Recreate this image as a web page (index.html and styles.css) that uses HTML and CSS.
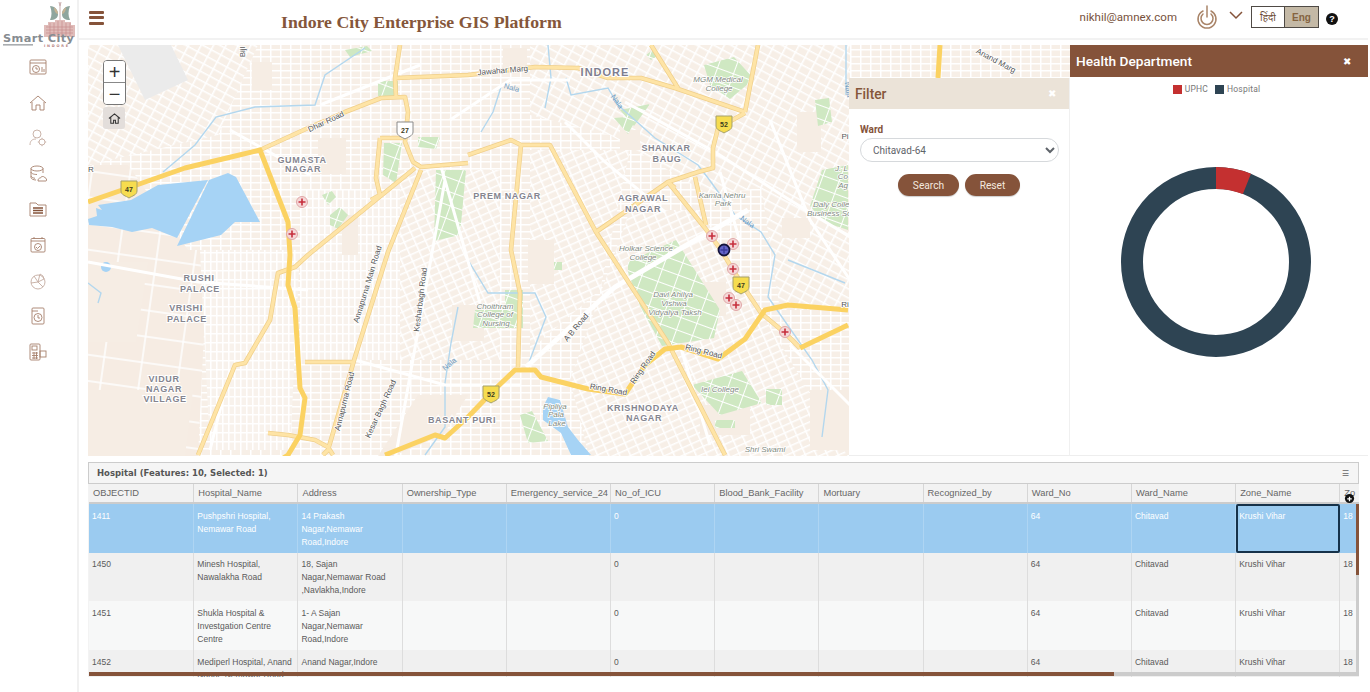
FILE: index.html
```html
<!DOCTYPE html>
<html lang="en">
<head>
<meta charset="utf-8">
<title>Indore City Enterprise GIS Platform</title>
<link rel="stylesheet" href="styles.css">
</head>
<body>
<aside class="sidebar">
  <svg class="logo" viewBox="0 0 79 47" width="79" height="47">
    <path d="M59 2l1 4 1-4M60 6v14" class="logo-stem"/>
    <path d="M50 6c5 0 8 4 8 8s-3 6-8 6c2-4 2-9 0-14z" class="logo-teal"/>
    <path d="M70 6c-5 0-8 4-8 8s3 6 8 6c-2-4-2-9 0-14z" class="logo-teal"/>
    <path d="M54 7c3 2 4 5 4 7-2 0-4-3-4-7zM66 7c-3 2-4 5-4 7 2 0 4-3 4-7z" class="logo-tan"/>
    <path d="M44 37V25h4v-3h7v-2h10v2h6v3h4v12z" class="logo-bld"/>
    <path d="M46 27h27M46 30h27M46 33h27M50 23v13M54 23v13M58 21v15M62 21v15M66 23v13M70 23v13" class="logo-win"/>
    <text x="3" y="42" class="logo-text">Smart City</text>
    <rect x="3" y="44" width="30" height="1.600" class="logo-bar"/>
    <text x="44" y="47" class="logo-sub">INDORE</text>
  </svg>
  <nav class="side-nav">
    <svg class="ico" viewBox="0 0 18 18"><rect x="1" y="2" width="16" height="14" rx="1"/><path d="M1 5h16"/><circle cx="7" cy="11" r="3.500"/><path d="M7 9v2h2M13 9v5M15 11v3"/></svg>
    <svg class="ico" viewBox="0 0 18 18"><path d="M1 9l8-7 8 7M3 8v8h4v-5h4v5h4V8"/></svg>
    <svg class="ico ico-l" viewBox="0 0 18 18"><circle cx="8" cy="5" r="4"/><path d="M1 16c0-4 2-6 6-6"/><circle cx="13" cy="13" r="3"/><path d="M13 8.800v1.200M13 16v1.200M8.800 13H10M16 13h1.200"/></svg>
    <svg class="ico" viewBox="0 0 18 18"><ellipse cx="8" cy="3.500" rx="6" ry="2.500"/><path d="M2 3.500v9c0 1.400 2.500 2.500 5 2.500M14 3.500V8M2 7c0 1.400 2.500 2.500 6 2.500M2 11c0 1 2 2 4 2.300"/><path d="M9 16c0-3 2-3 2.500-3 .5-2 4-2 4.500 0 2 0 2 3 1 3z"/></svg>
    <svg class="ico" viewBox="0 0 18 18"><path d="M1 3h6l2 2h8v11H1z"/><path class="ico-bar" d="M4 8h10M4 10.500h10M4 13h10"/></svg>
    <svg class="ico" viewBox="0 0 18 18"><rect x="2" y="2.500" width="14" height="13.500" rx="1"/><path d="M2 5h14M5 1v2M13 1v2M7 11l1.500 1.500L11 10"/><circle cx="9" cy="11" r="3.500"/></svg>
    <svg class="ico ico-l" viewBox="0 0 18 18"><circle cx="9" cy="10" r="7"/><path d="M5 4l4 6-7 1M9 10l5 5M9 10l2-8 3 2 1 3z"/></svg>
    <svg class="ico" viewBox="0 0 18 18"><rect x="3" y="1" width="12" height="16" rx="1"/><path d="M3 4h6"/><circle cx="9" cy="10.500" r="4"/><path d="M9 8v3h2"/></svg>
    <svg class="ico" viewBox="0 0 18 18"><rect x="1" y="1" width="10" height="16" rx="1"/><rect x="3" y="3" width="5" height="4"/><path d="M3 10h6M3 12.500h6M3 15h6M5 9v7M7.500 9v7"/><rect x="11" y="8" width="6" height="6"/></svg>
  </nav>
</aside>

<div class="main">
  <header class="topbar">
    <div class="menu-btn"><span></span><span></span><span></span></div>
    <h1 class="app-title">Indore City Enterprise GIS Platform</h1>
    <div class="user">
      <span class="email">nikhil@amnex.com</span>
      <svg class="power" viewBox="0 0 22 24" width="22" height="24"><path d="M7 6a9 9 0 1 0 8 0"/><path d="M7 9a6 6 0 1 0 8 0"/><path d="M11 1v11"/></svg>
      <svg class="chev" viewBox="0 0 14 9" width="14" height="9"><path d="M1 1l6 6 6-6"/></svg>
      <div class="lang"><span class="lang-hi">हिंदी</span><span class="lang-en">Eng</span></div>
      <span class="help">?</span>
    </div>
  </header>

  <section class="workspace">
    <div class="map">
      <svg class="map-svg" viewBox="88 45 982 411" width="982" height="411">
        <defs>
          <pattern id="g1" width="10" height="7" patternUnits="userSpaceOnUse"><rect width="10" height="7" fill="#f7efe7"/><path d="M0 .7h10M.7 0v7" stroke="#fff" stroke-width="1.700"/></pattern>
          <pattern id="g2" width="11" height="8" patternUnits="userSpaceOnUse" patternTransform="rotate(28)"><rect width="11" height="8" fill="#f7efe7"/><path d="M0 .7h11M.7 0v8" stroke="#fff" stroke-width="1.800"/></pattern>
          <pattern id="g3" width="10" height="7" patternUnits="userSpaceOnUse" patternTransform="rotate(-24)"><rect width="10" height="7" fill="#f7efe7"/><path d="M0 .7h10M.7 0v7" stroke="#fff" stroke-width="1.700"/></pattern>
          <pattern id="g4" width="38" height="26" patternUnits="userSpaceOnUse" patternTransform="rotate(8)"><rect width="38" height="26" fill="#f6ece3"/><path d="M0 1h38M1 0v26" stroke="#fff" stroke-width="1.500"/></pattern>
          <pattern id="g5" width="6" height="9" patternUnits="userSpaceOnUse"><rect width="6" height="9" fill="#f8f2ec"/><path d="M0 .7h6M.7 0v9" stroke="#fff" stroke-width="1.800"/></pattern>
          <pattern id="gp" width="17" height="13" patternUnits="userSpaceOnUse" patternTransform="rotate(20)"><rect width="17" height="13" fill="#cfe8c2"/><path d="M0 .5h17M.5 0v13" stroke="#fff" stroke-width="1"/></pattern>
          <g id="mk"><circle r="5.500" class="mk-o"/><path d="M-3.500 0h7M0-3.500v7" class="mk-p"/></g>
          <path id="sh" d="M-8-8h16v10c0 4-5 5-8 7-3-2-8-3-8-7z"/>
        </defs>
        <g class="base">
          <rect x="88" y="45" width="982" height="411" fill="url(#g1)"/>
          <path d="M88 45h170l-40 90-130 30z" fill="url(#g2)"/>
          <path d="M88 250h120l-10 206H88z" fill="url(#g4)"/>
          <path d="M88 165h40l60 85-30 40H88z" fill="url(#g4)"/>
          <path d="M200 250h100l-10 200h-80z" fill="url(#g5)"/>
          <path d="M300 190h110v170H300z" fill="url(#g5)"/>
          <path d="M400 170h100v190H400z" fill="url(#g3)"/>
          <path d="M530 45h320v130l-140 20-100-60-80-20z" fill="url(#g2)"/>
          <path d="M530 150h100l-30 140-70 60z" fill="url(#g3)"/>
          <path d="M630 210h70l90 150 60 100H590l-20-80z" fill="url(#g3)"/>
          <path d="M760 180h90v130h-70z" fill="url(#g2)"/>
          <g class="beige">
            <path d="M88 390h105l-8 66H88zM88 262h60l-12 80H88zM418 395h50l-25 40-50 21h-15zM528 240h26v44h-26zM810 390h40v60h-40zM702 282h24v34h-24zM342 215h16v40h-16zM452 305h32v36h-32zM797 112h24v40h-24zM700 405h50v30h-50zM620 130h20v20h-20zM503 48h24v24h-24zM782 218h28v20h-28zM252 62h20v28h-20zM318 138h28v36h-28z"/>
          </g>
          <g class="park">
            <path d="M378 81h20v16h-20zM345 50l22-4 5 5-22 6zM436 170h30l-6 65-26 6zM384 143h18l-6 40-13-8zM418 137h22l-4 12-18-2zM322 195l10-4 4 6-8 8zM330 215l10-8 8 8-10 14-8-4zM646 55l8-6 5 6-8 5zM704 65l30-8 20 22-24 20-20-14zM620 110l30-6-16 22zM614 118l24-2-10 18zM815 100l14-2 3 24-14 4zM822 170l26-5v65l-24-8-14-16z"/>
            <path d="M628 262l48-22 44 70-6 28-52 8-22-40-12-34zM475 310h30v-20h18v38h-50zM692 385l50-14 20 32-42 12zM766 389h16v16h-16zM520 415l12-4 16 30-20 2zM715 420h20v8h-20zM554 262h8v8h-8z"/>
          </g>
          <path d="M118 45h53l17 35-43 20z" class="grey-area"/>
          <g class="water">
            <path d="M98 205l33-5 27-15 50-5-31 58-25-10-20 4-20-5-23-2-1-6 9-3-1-8 6 2zM209 180l19-7 8 4 24 45h-25l-14 13-44 11z"/>
            <path d="M548 397l12 3 8 27 10 13 13 15h-20l-10-22-18-13v-13z"/>
            <circle cx="106" cy="267" r="5"/>
          </g>
          <g class="river">
            <path d="M163 172l32-27 21-28 39-10 60-2 10-30 40-27M548 45l3 33-6 30M501 87l-8 25-12 20M566 78l5 17 37-7 10 17 37 33 43 27 10 13 27 37 26 17 14 23 -7 42 44 63 16 30-6 47M788 260l25 10 32 13M468 260l20 33h47l11 24-18 48M458 307l-7 36-6 40v44l-20 28M88 283l13 10-3 10M846 45v50"/>
          </g>
          <g class="wroad">
            <path d="M355 360l90 25 75 0M88 262l110 20 110 8M625 102l90 50 70 45 65 40M440 163l40 140M720 172l20 70M680 345l30 100M770 120l40 100 40 60M320 105l100-40M230 130l80 45M790 345l60 60M445 180l-50 280M230 370l-20 80M565 122l40 40 60 50M450 120l60-40 60 0"/>
          </g>
          <path d="M526 367l89-80 63-37 70-40" class="wroad-b"/>
        </g>
        <g class="road-c">
          <path id="r-a" d="M260 150l48-22 37-16 36-14 24-1 3 15-3 30 8 20 8 5 47-4M400 45l-5 33 1 19M396 78l72-3 67-8 43 1 30 10h33l34 10 70 24M758 45l-13 67M651 45l27 43M745 113l-27 15-5 20v20l-15 4-30 10-72 50M668 182l37 46 16 22 20 33 20 30 24 20 15 15M695 177l11 48M675 188l-7-6M468 155l43-15 10 5h29l46 87 72 111 57 112M521 145l-10 105 9 43-2 74M415 168l-107 87-13 12-17 6-8 47-25 43-10 2-37 90M421 170l-33 82-33 105-27 93-5 5M305 362h50M268 433l20 2 27 5 13 7 5 8M380 138h23M380 138l-4 40 4 17-9 5"/>
        </g>
        <g class="road-f"><use href="#r-a"/></g>
        <g class="road-t">
          <path d="M88 202l40-14 57-20 46-11 29-7 28 72 2 33-2 30 7 23 5 80 5 10-5 37-12 20-20 13-8 22M385 455l50-20 10 3 23-21 23-24 24-23h20l6 7 47 12 37 5 20-29 20-16 16-2 37 12 27-20 20-29 23-5 60 5M800 348l48-23M940 45l-2 33"/>
        </g>
        <g class="lbl">
          <text x="605" y="76" class="lbl-big">INDORE</text>
          <text x="302" y="163">GUMASTA</text><text x="303" y="172">NAGAR</text>
          <text x="507" y="199">PREM NAGAR</text>
          <text x="666" y="151">SHANKAR</text><text x="667" y="162">BAUG</text>
          <text x="643" y="201">AGRAWAL</text><text x="643" y="212">NAGAR</text>
          <text x="199" y="281">RUSHI</text><text x="200" y="292">PALACE</text>
          <text x="186" y="311">VRISHI</text><text x="187" y="322">PALACE</text>
          <text x="164" y="382">VIDUR</text><text x="164" y="392">NAGAR</text><text x="165" y="402">VILLAGE</text>
          <text x="462" y="423">BASANT PURI</text>
          <text x="643" y="411">KRISHNODAYA</text><text x="644" y="421">NAGAR</text>
        </g>
        <g class="lbl-i">
          <text x="718" y="82">MGM Medical</text><text x="719" y="91">College</text>
          <text x="722" y="198">Kamla Nehru</text><text x="723" y="206">Park</text>
          <text x="646" y="251">Holkar Science</text><text x="643" y="260">College</text>
          <text x="673" y="297">Davi Ahilya</text><text x="674" y="306">Vishwa</text><text x="675" y="315">Vidyalya Taksh</text>
          <text x="495" y="309">Choithram</text><text x="495" y="317">College of</text><text x="496" y="326">Nursing</text>
          <text x="720" y="392">Iel College</text>
          <text x="555" y="409">Pipliya</text><text x="556" y="417">Pala</text><text x="557" y="426">Lake</text>
          <text x="813" y="207" class="lbl-st">Daly College</text><text x="807" y="216" class="lbl-st">Business School</text>
          <text x="848" y="171" class="lbl-end">J. L</text><text x="848" y="179" class="lbl-end">Co</text><text x="848" y="188" class="lbl-end">Ag</text>
          <text x="765" y="452">Shri Swami</text>
        </g>
        <g class="lbl-r">
          <text transform="translate(503 73) rotate(-5)">Jawahar Marg</text>
          <text transform="translate(327 124) rotate(-25)">Dhar Road</text>
          <text transform="translate(370 285) rotate(-73)">Annapurna Main Road</text>
          <text transform="translate(423 300) rotate(-83)">Kesharbagh Road</text>
          <text transform="translate(347 402) rotate(-76)">Annapurna Road</text>
          <text transform="translate(383 410) rotate(-65)">Kesar Bagh Road</text>
          <text transform="translate(578 329) rotate(-50)">A B Road</text>
          <text transform="translate(608 392) rotate(10)">Ring Road</text>
          <text transform="translate(645 369) rotate(-55)">Ring Road</text>
          <text transform="translate(703 354) rotate(14)">Ring Road</text>
          <text transform="translate(245 52) rotate(-90)">Bijl</text>
          <text x="845" y="139">Pi</text><text x="845" y="307">Ri</text>
          <text x="88" y="172" class="lbl-start">R</text>
          <text transform="translate(760 57) rotate(28)" x="210" y="-105">Anand Marg</text>
        </g>
        <g class="lbl-n">
          <text transform="translate(511 90) rotate(15)">Nala</text>
          <text transform="translate(615 103) rotate(55)">Nala</text>
          <text transform="translate(746 224) rotate(35)">Nala</text>
          <text transform="translate(451 366) rotate(-40)">Nala</text>
          <text transform="translate(846 90) rotate(80)">Nala</text>
        </g>
        <g class="shield">
          <g transform="translate(129 189)"><use href="#sh" class="sh-y"/><text y="3">47</text></g>
          <g transform="translate(405 130)"><use href="#sh" class="sh-w"/><text y="3">27</text></g>
          <g transform="translate(724 124)"><use href="#sh" class="sh-y"/><text y="3">52</text></g>
          <g transform="translate(741 285)"><use href="#sh" class="sh-y"/><text y="3">47</text></g>
          <g transform="translate(491 394)"><use href="#sh" class="sh-y"/><text y="3">52</text></g>
        </g>
        <use href="#mk" x="302" y="202"/><use href="#mk" x="292" y="234"/><use href="#mk" x="712" y="236"/>
        <use href="#mk" x="733" y="244"/><use href="#mk" x="733" y="269"/><use href="#mk" x="729" y="298"/>
        <use href="#mk" x="736" y="305"/><use href="#mk" x="785" y="332"/>
        <circle cx="724" cy="250" r="5.500" class="mk-sel"/><path d="M720.500 250h7M724 246.500v7" class="mk-selp"/>
      </svg>
      <div class="zoom">
        <button class="zoom-b" type="button">+</button>
        <button class="zoom-b" type="button">−</button>
      </div>
      <div class="home-b"><svg viewBox="0 0 14 14" width="13" height="13"><path d="M1 7l6-5 6 5M3 6v6h3V9h2v3h3V6"/></svg></div>
      <div class="filter">
        <div class="filter-h"><span>Filter</span><span class="filter-x">✖</span></div>
        <div class="filter-b">
          <label class="ward">Ward</label>
          <select class="ward-sel"><option>Chitavad-64</option></select>
          <div class="btns"><button class="pill pill-s" type="button">Search</button><button class="pill pill-r" type="button">Reset</button></div>
        </div>
      </div>
    </div>
    <div class="panel">
      <div class="panel-h"><span>Health Department</span><span class="panel-x">✖</span></div>
      <div class="legend"><i class="sw sw-r"></i><span>UPHC</span><i class="sw sw-b"></i><span>Hospital</span></div>
      <svg class="donut" viewBox="0 0 200 200" width="200" height="200">
        <circle cx="100" cy="100" r="84" class="d-b"/>
        <circle cx="100" cy="100" r="84" class="d-r" pathLength="100" stroke-dasharray="6 94" transform="rotate(-90 100 100)"/>
      </svg>
    </div>
  </section>

  <section class="grid">
    <div class="grid-title"><span>Hospital (Features: 10, Selected: 1)</span><span class="grid-menu">☰</span></div>
    <div class="grid-body">
      <div class="row head"><div>OBJECTID</div><div>Hospital_Name</div><div>Address</div><div>Ownership_Type</div><div>Emergency_service_24</div><div>No_of_ICU</div><div>Blood_Bank_Facility</div><div>Mortuary</div><div>Recognized_by</div><div>Ward_No</div><div>Ward_Name</div><div>Zone_Name</div><div>Zo</div></div>
      <div class="row sel"><div>1411</div><div>Pushpshri Hospital, Nemawar Road</div><div>14 Prakash Nagar,Nemawar Road,Indore</div><div></div><div></div><div>0</div><div></div><div></div><div></div><div>64</div><div>Chitavad</div><div class="active">Krushi Vihar</div><div>18</div></div>
      <div class="row alt"><div>1450</div><div>Minesh Hospital, Nawalakha Road</div><div>18, Sajan Nagar,Nemawar Road ,Navlakha,Indore</div><div></div><div></div><div>0</div><div></div><div></div><div></div><div>64</div><div>Chitavad</div><div>Krushi Vihar</div><div>18</div></div>
      <div class="row"><div>1451</div><div>Shukla Hospital &amp; Investgation Centre Centre</div><div>1- A Sajan Nagar,Nemawar Road,Indore</div><div></div><div></div><div>0</div><div></div><div></div><div></div><div>64</div><div>Chitavad</div><div>Krushi Vihar</div><div>18</div></div>
      <div class="row alt"><div>1452</div><div>Mediperl Hospital, Anand Nagar, Nemawar Road</div><div>Anand Nagar,Indore</div><div></div><div></div><div>0</div><div></div><div></div><div></div><div>64</div><div>Chitavad</div><div>Krushi Vihar</div><div>18</div></div>
      <div class="hbar"><div class="hbar-t"></div></div>
      <div class="vbar"><div class="vbar-t"></div></div>
      <svg class="col-add" viewBox="0 0 12 12" width="11" height="11"><circle cx="6" cy="6" r="5"/><path d="M3.500 6.500h5M6 4v5"/></svg>
    </div>
  </section>
</div>
</body>
</html>
```

FILE: styles.css
```css
* { box-sizing: border-box; }
html, body { margin: 0; height: 100%; overflow: hidden; background: #fff; }
body { display: flex; width: 1370px; height: 692px; font-family: "Liberation Sans", Arial, sans-serif; }

.sidebar { width: 79px; flex: none; border-right: 2px solid #f1f1f1; display: flex; flex-direction: column; }
.logo { display: block; flex: none; }
.logo-stem { fill: none; stroke: #b99; stroke-width: .8; }
.logo-teal { fill: #8fa69e; }
.logo-tan { fill: #c6b394; }
.logo-bld { fill: #e0bcb9; }
.logo-win { fill: none; stroke: #c68e8d; stroke-width: .7; }
.logo-text { font: bold 11.300px "DejaVu Sans", sans-serif; letter-spacing: .4px; fill: #868c91; }
.logo-bar { fill: #a9adb0; }
.logo-sub { font: bold 3.500px "DejaVu Sans", sans-serif; letter-spacing: 1.800px; fill: #b58080; }
.side-nav { display: flex; flex-direction: column; align-items: center; gap: 17.600px; padding-top: 11px; padding-right: 1px; }
.ico { width: 18px; height: 18px; fill: none; stroke: #a6806c; stroke-width: .9; flex: none; }
.ico-l { stroke: #c4aca0; }
.ico-bar { stroke: #85533a; stroke-width: 1.300; }

.main { flex: 1; min-width: 0; display: flex; flex-direction: column; }
.topbar { height: 40px; margin-right: 2px; padding: 0 0 0 10px; display: flex; align-items: center; border-bottom: 2px solid #f2f2f2; position: relative; flex: none; }
.menu-btn { width: 15px; display: flex; flex-direction: column; gap: 2.500px; margin-top: -3px; }
.menu-btn span { display: block; height: 3px; background: #85533a; border-radius: 1px; }
.app-title { margin: 6px 0 0 177px; font: bold 17.750px "Liberation Serif", "Times New Roman", serif; color: #85563a; white-space: nowrap; }
.user { margin-left: auto; display: flex; align-items: center; padding-right: 30px; margin-top: -4px; }
.email { font: 11.500px Roboto, sans-serif; color: #77513c; }
.power { margin-left: 19px; fill: none; stroke: #a98468; stroke-width: 1.500; stroke-linecap: round; }
.chev { margin-left: 11px; margin-top: -3px; fill: none; stroke: #85533a; stroke-width: 1.500; }
.lang { margin-left: 8px; width: 68px; height: 22px; display: flex; border: 1px solid #4f4a45; font-size: 10px; }
.lang-hi { flex: 1; display: flex; align-items: center; justify-content: center; font-family: "Noto Sans", "DejaVu Sans", sans-serif; color: #6b4a36; background: #fff; border-right: 1px solid #4f4a45; }
.lang-en { width: 33px; display: flex; align-items: center; justify-content: center; font-weight: bold; color: #85633f; background: #c4b9a6; }
.help { margin-left: 7px; width: 12px; height: 12px; border-radius: 50%; background: #111; color: #fff; font: bold 9px/12px "Liberation Sans", sans-serif; text-align: center; margin-top: 3px; }

.workspace { display: flex; height: 411px; margin: 5px 0 0 9px; flex: none; }
.map { width: 982px; flex: none; position: relative; overflow: hidden; }
.map-svg { display: block; }
.base { filter: blur(.4px); }
.grey-area { fill: #ebebeb; }
.beige { fill: #f6ede4; }
.park { fill: url(#gp); }
.water { fill: #a6d3f5; }
.river { fill: none; stroke: #b3d7ee; stroke-width: 1.400; }
.wroad { fill: none; stroke: #fff; stroke-width: 3; }
.wroad-b { fill: none; stroke: #fff; stroke-width: 5; }
.road-c { fill: none; stroke: #f0cf8a; stroke-width: 4.600; stroke-linejoin: round; }
.road-f { fill: none; stroke: #fee4a6; stroke-width: 3.200; stroke-linejoin: round; }
.road-t { fill: none; stroke: #fbd262; stroke-width: 5; stroke-linejoin: round; }
.lbl text { font: bold 9px "Liberation Sans", sans-serif; letter-spacing: .6px; fill: #85858f; text-anchor: middle; stroke: #fff; stroke-width: 2px; paint-order: stroke; }
.lbl .lbl-big { font-size: 11px; letter-spacing: 1px; fill: #7e7e90; }
.lbl-i text { font: italic 8px "Liberation Sans", sans-serif; fill: #7f8a80; text-anchor: middle; stroke: #fff; stroke-width: 1.500px; paint-order: stroke; }
.lbl-i .lbl-end { text-anchor: end; }
.lbl-i .lbl-st { text-anchor: start; }
.lbl-r text { font: 8px "Liberation Sans", sans-serif; fill: #555; text-anchor: middle; stroke: #fff; stroke-width: 1.500px; paint-order: stroke; }
.lbl-r .lbl-start { text-anchor: start; }
.lbl-n text { font: 7.500px "Liberation Sans", sans-serif; fill: #6a98bf; text-anchor: middle; }
.shield text { font: bold 7px "Liberation Sans", sans-serif; fill: #3c3c20; text-anchor: middle; }
.sh-y { fill: #f6dc4f; stroke: #a5a06a; stroke-width: 1; }
.sh-w { fill: #fff; stroke: #8a8a8a; stroke-width: 1; }
.mk-o { fill: #f5d8d8; stroke: #e0a7a7; stroke-width: 1; }
.mk-p { stroke: #c62f3d; stroke-width: 1.600; fill: none; }
.mk-sel { fill: #6464c8; stroke: #14143c; stroke-width: 1.800; }
.mk-selp { stroke: #3a3a9a; stroke-width: 1.400; fill: none; }

.zoom { position: absolute; left: 15px; top: 15px; width: 23px; height: 45px; display: flex; flex-direction: column; background: #fff; border: 1px solid #777; border-radius: 4px; overflow: hidden; }
.zoom-b { flex: 1; padding: 0; border: 0; background: #fff; font: 20px/20px "Liberation Sans", sans-serif; color: #333; }
.zoom-b + .zoom-b { border-top: 1px solid #888; }
.home-b { position: absolute; left: 15px; top: 62px; width: 22px; height: 22px; display: flex; align-items: center; justify-content: center; background: #e3dedb; border-radius: 3px; }
.home-b svg { fill: none; stroke: #333; stroke-width: 1.100; }

.filter { position: absolute; left: 761px; top: 33px; width: 221px; height: 378px; background: #fff; border-right: 1px solid #f0f0f0; border-bottom: 1px solid #eee; }
.filter-h { height: 31px; padding: 0 13px 0 6px; background: #ebe3d8; display: flex; align-items: center; justify-content: space-between; font: 500 13.800px Roboto, sans-serif; color: #85563a; }
.filter-x { font-size: 10px; color: #fff; }
.filter-b { padding: 14px 11px 0; display: flex; flex-direction: column; }
.ward { font: bold 10px Roboto, sans-serif; color: #85533a; margin-bottom: 2px; height: 13px; line-height: 13px; }
.ward-sel { width: 199px; height: 24px; padding-left: 8px; border: 1px solid #d6d9dc; border-radius: 12px; background: #fff; font: 10px Roboto, sans-serif; color: #5f646a; }
.btns { display: flex; justify-content: center; gap: 6px; margin-top: 12px; }
.pill { height: 22px; border: 0; border-radius: 11px; background: #85533a; color: #f4e8df; font: 10.200px Roboto, sans-serif; padding: 0; box-shadow: 0 1px 1px #ccc; }
.pill-s { width: 61px; }
.pill-r { width: 55px; }

.panel { flex: 1; display: flex; flex-direction: column; align-items: center; margin-right: 2px; border-bottom: 1px solid #eee; }
.panel-h { width: 100%; height: 32px; flex: none; padding: 0 17px 0 6px; background: #85533a; color: #fff; display: flex; align-items: center; justify-content: space-between; font: 500 13.700px Roboto, sans-serif; }
.panel-x { font-size: 10px; }
.legend { margin-top: 7px; display: flex; align-items: center; height: 10px; font: 8.500px Roboto, sans-serif; color: #777; letter-spacing: .2px; margin-left: -5px; }
.sw { width: 9px; height: 9px; display: block; margin-right: 3px; }
.sw-r { background: #c43030; }
.sw-b { background: #2e4453; margin-left: 7px; }
.donut { margin-top: 68px; margin-left: -6px; flex: none; }
.donut circle { fill: none; stroke-width: 22; }
.d-b { stroke: #2e4453; }
.d-r { stroke: #c43030; }

.grid { margin: 6px 11px 0 9px; height: 215px; flex: none; }
.grid-title { height: 22px; padding: 0 9px 0 8px; background: #f5f5f5; border: 1px solid #ccc; display: flex; align-items: center; justify-content: space-between; font: bold 8.500px "DejaVu Sans", sans-serif; color: #555; }
.grid-menu { font-weight: normal; font-size: 8px; color: #666; }
.grid-body { position: relative; height: 193px; overflow: hidden; padding-left: 1px; background: #f3f3f3; }
.row { display: grid; grid-template-columns: 105.300px repeat(11, 104.200px) 20px; height: 48.700px; background: #f7f8f8; font-size: 8.500px; line-height: 13px; color: #5a5a5a; }
.row > div { padding: 5.500px 3px 0 3px; border-right: 1px solid #ddd; overflow: hidden; }
.row.alt { background: #f0f0f0; }
.row.head { height: 20px; background: #f2f2f2; font-size: 9.300px; color: #666; border-bottom: 2px solid #ccc; }
.row.head > div { padding: 3px 4px 0; white-space: nowrap; border-right-color: #d6d6d6; }
.row.sel { background: #9bcbf0; color: #fff; }
.row.sel > div { border-right-color: #aed5f3; }
.row.sel .active { border: 2px solid #16324a; border-radius: 2px; padding: 3.500px 1px 0; }
.hbar { position: absolute; left: 1px; right: 0; top: 188px; height: 4px; background: #ccc; }
.hbar-t { width: 1025px; height: 100%; background: #85533a; }
.vbar { position: absolute; right: 0; top: 20px; width: 3px; height: 168px; background: #ccc; }
.vbar-t { height: 71px; background: #85533a; }
.col-add { position: absolute; left: 1256px; top: 9px; }
.col-add circle { fill: #111; }
.col-add path { stroke: #fff; stroke-width: 1.400; }
```
